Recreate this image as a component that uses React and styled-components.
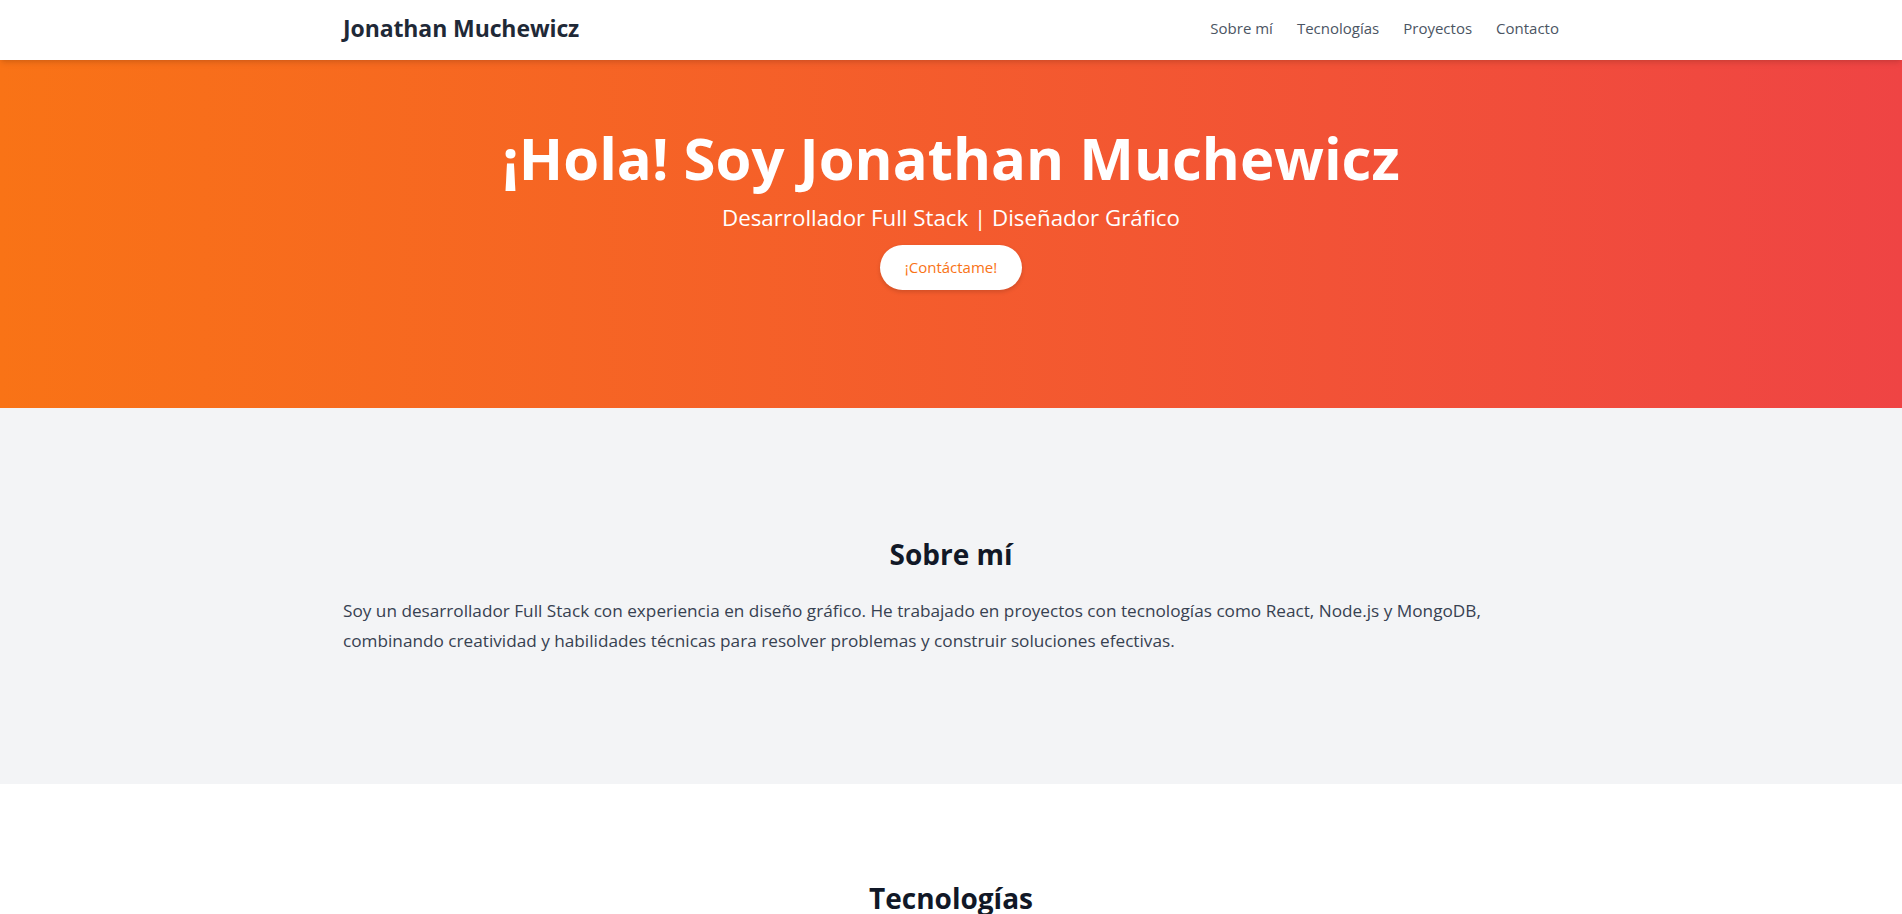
import React from 'react'
import styled, { createGlobalStyle } from 'styled-components'

const GlobalStyle = createGlobalStyle`
  * { box-sizing: border-box; }
  body {
    margin: 0;
    font-family: "Open Sans", "Noto Sans", sans-serif;
    background: #ffffff;
    color: #1f2937;
  }
  h1, h2, p { margin: 0; }
`

const Header = styled.header`
  position: relative;
  z-index: 2;
  height: 60px;
  background: #ffffff;
  box-shadow: 0 4px 6px -1px rgba(0, 0, 0, 0.1), 0 2px 4px -2px rgba(0, 0, 0, 0.1);
`

const Container = styled.div`
  max-width: 1280px;
  margin: 0 auto;
  padding: 0 32px;
`

const NavBar = styled(Container)`
  height: 100%;
  padding-bottom: 4px;
  display: flex;
  align-items: center;
  justify-content: space-between;
`

const Logo = styled.a`
  font-size: 23px;
  font-weight: 700;
  color: #1f2937;
  text-decoration: none;
  letter-spacing: -0.1px;
`

const NavLinks = styled.nav`
  display: flex;
  gap: 24px;
`

const NavLink = styled.a`
  font-size: 15px;
  color: #4b5563;
  text-decoration: none;
`

const Hero = styled.section`
  height: 348px;
  padding-top: 65px;
  background: linear-gradient(to right, #f97316, #ef4444);
  color: #ffffff;
  display: flex;
  flex-direction: column;
  align-items: center;
  text-align: center;
`

const HeroTitle = styled.h1`
  font-size: 58px;
  line-height: 1.15;
  font-weight: 700;
`

const HeroSubtitle = styled.p`
  margin-top: 10px;
  font-size: 22.3px;
  line-height: 32px;
`

const HeroButton = styled.a`
  margin-top: 11px;
  display: inline-block;
  padding: 10px 25px;
  border-radius: 9999px;
  background: #ffffff;
  color: #f97316;
  font-size: 15px;
  line-height: 25px;
  text-decoration: none;
  box-shadow: 0 2px 4px rgba(0, 0, 0, 0.15);
`

const Section = styled.section`
  background: ${p => (p.$gray ? '#f3f4f6' : '#ffffff')};
  padding: ${p => p.$top || 128}px 0 128px;
`

const SectionTitle = styled.h2`
  font-size: 28px;
  line-height: 36px;
  font-weight: 700;
  color: #111827;
  text-align: center;
  margin-bottom: 24px;
`

const Paragraph = styled.p`
  font-size: 17.2px;
  line-height: 30px;
  color: #374151;
`

const App = () => {
  return (
    <>
      <GlobalStyle />
      <Header>
        <NavBar>
          <Logo href="#">Jonathan Muchewicz</Logo>
          <NavLinks>
            <NavLink href="#sobre-mi">Sobre mí</NavLink>
            <NavLink href="#tecnologias">Tecnologías</NavLink>
            <NavLink href="#proyectos">Proyectos</NavLink>
            <NavLink href="#contacto">Contacto</NavLink>
          </NavLinks>
        </NavBar>
      </Header>

      <Hero>
        <HeroTitle>¡Hola! Soy Jonathan Muchewicz</HeroTitle>
        <HeroSubtitle>Desarrollador Full Stack | Diseñador Gráfico</HeroSubtitle>
        <HeroButton href="#contacto">¡Contáctame!</HeroButton>
      </Hero>

      <Section $gray id="sobre-mi">
        <Container>
          <SectionTitle>Sobre mí</SectionTitle>
          <Paragraph>
            Soy un desarrollador Full Stack con experiencia en diseño gráfico. He trabajado en proyectos con tecnologías como React, Node.js y MongoDB,
            combinando creatividad y habilidades técnicas para resolver problemas y construir soluciones efectivas.
          </Paragraph>
        </Container>
      </Section>

      <Section id="tecnologias" $top={96}>
        <Container>
          <SectionTitle>Tecnologías</SectionTitle>
        </Container>
      </Section>
    </>
  )
}

export default App
